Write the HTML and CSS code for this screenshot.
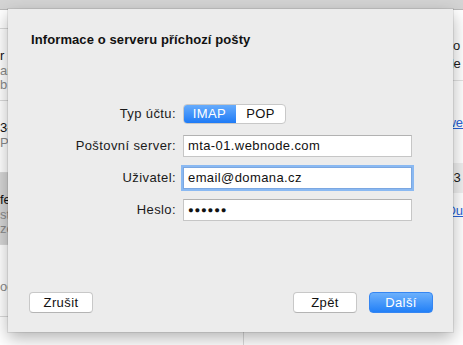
FILE: index.html
```html
<!DOCTYPE html>
<html lang="cs">
<head>
    <meta charset="UTF-8">
    <meta name="viewport" content="width=device-width, initial-scale=1.0">
    <title>Informace o serveru příchozí pošty</title>
    <link rel="stylesheet" href="styles.css">
</head>
<body>
    <div class="app">
        <div class="toolbar"></div>
        <div class="panes">
            <div class="message-list">
                <div class="list-header"></div>
                <div class="message-item">
                    <div class="sender">r com</div>
                    <div class="preview">an</div>
                    <div class="preview">b</div>
                </div>
                <div class="message-item">
                    <div class="sender">3-01</div>
                    <div class="preview">P</div>
                </div>
                <div class="message-item selected">
                    <div class="sender">fe</div>
                    <div class="preview">st</div>
                    <div class="preview">ze</div>
                </div>
                <div class="message-item">
                    <div class="sender"></div>
                    <div class="preview">od</div>
                </div>
            </div>
            <div class="message-view">
                <div class="body-line">co</div>
                <div class="body-line">de</div>
                <hr class="divider">
                <a class="link first-link" href="#">we</a>
                <div class="info-band">13</div>
                <a class="link" href="#">Du</a>
            </div>
        </div>
    </div>

    <!-- account setup sheet -->
    <div class="sheet">
        <h1 class="sheet-title">Informace o serveru příchozí pošty</h1>
        <div class="form">
            <div class="form-label">Typ účtu:</div>
            <div class="segmented">
                <span class="segment active">IMAP</span>
                <span class="segment">POP</span>
            </div>
            <div class="form-label">Poštovní server:</div>
            <div class="field">mta-01.webnode.com</div>
            <div class="form-label">Uživatel:</div>
            <div class="field focused">email@domana.cz</div>
            <div class="form-label">Heslo:</div>
            <div class="field password">●●●●●●</div>
        </div>
        <div class="sheet-buttons">
            <button class="btn">Zrušit</button>
            <div class="btn-group">
                <button class="btn">Zpět</button>
                <button class="btn primary">Další</button>
            </div>
        </div>
    </div>
</body>
</html>
```

FILE: styles.css
```css
body {
    font-family: 'Liberation Sans', Arial, sans-serif;
    font-size: 13px;
    margin: 0;
    width: 463px;
    height: 345px;
    overflow: hidden;
    background-color: #fff;
    color: #1a1a1a;
    position: relative;
}
.toolbar {
    height: 9px;
    background: #d4d4d4;
    border-bottom: 1px solid #b8b8b8;
}
.panes {
    display: flex;
    height: 335px;
}
.message-list {
    width: 249px;
    border-right: 1px solid #dadada;
}
.list-header {
    height: 18px;
    border-bottom: 1px solid #dadada;
}
.message-item {
    height: 51px;
    padding-top: 20px;
    border-bottom: 1px solid #dadada;
    line-height: 14px;
    white-space: nowrap;
}
.message-item.selected {
    background-color: #d6d6d6;
}
.sender {
    color: #111;
    height: 15px;
}
.preview {
    color: #8a8a8a;
}
.message-view {
    flex-grow: 1;
    padding: 27px 0 0 202px;
    line-height: 18px;
    white-space: nowrap;
}
.divider {
    border: none;
    border-top: 1px solid #e2e2e2;
    margin: 7px 0 0 -10px;
}
.link {
    display: block;
    color: #2a63d8;
}
.first-link {
    margin-top: 33px;
}
.info-band {
    background: #efefef;
    margin: 31px 0 0 -10px;
    padding-left: 10px;
    height: 30px;
    line-height: 30px;
}
.info-band + .link {
    margin-top: 9px;
}
.sheet {
    position: absolute;
    left: 8px;
    top: 9px;
    width: 445px;
    height: 323px;
    box-sizing: border-box;
    padding: 23px 20px 19px 21px;
    background: #ececec;
    box-shadow: 0 0 0 1px rgba(0,0,0,0.08), 0 6px 16px rgba(0,0,0,0.3);
    display: flex;
    flex-direction: column;
    letter-spacing: 0.4px;
}
.sheet-title {
    margin: 0;
    padding-left: 2px;
    font-size: 13px;
    line-height: 16px;
    font-weight: bold;
    letter-spacing: 0.1px;
    color: #111;
}
.form {
    margin-top: 55px;
    display: grid;
    grid-template-columns: 147px 229px;
    grid-auto-rows: 22px;
    column-gap: 7px;
    row-gap: 10px;
}
.form-label {
    text-align: right;
    line-height: 22px;
    color: #1a1a1a;
}
.segmented {
    align-self: center;
    display: flex;
    width: 103px;
    height: 20px;
    box-sizing: border-box;
    border: 1px solid #c8c8c8;
    border-radius: 4px;
    background: #fff;
    overflow: hidden;
}
.segment {
    flex-grow: 1;
    text-align: center;
    line-height: 18px;
    color: #111;
}
.segment.active {
    flex-grow: 0;
    width: 53px;
    color: #fff;
    background: linear-gradient(#6aaefc, #1a78f6);
    margin: -1px 0 -1px -1px;
    line-height: 20px;
}
.field {
    box-sizing: border-box;
    background: #fff;
    border: 1px solid #c6c6c6;
    border-top-color: #b2b2b2;
    padding-left: 4px;
    line-height: 20px;
    color: #111;
}
.field.focused {
    border-color: #7ba7e1;
    box-shadow: 0 0 0 2px #8ab9f2;
}
.field.password {
    font-size: 9.5px;
    letter-spacing: 0.8px;
    line-height: 20px;
}
.sheet-buttons {
    margin-top: auto;
    display: flex;
    justify-content: space-between;
}
.btn-group {
    display: flex;
    gap: 12px;
}
.btn {
    font-family: inherit;
    font-size: 13px;
    letter-spacing: inherit;
    width: 64px;
    height: 21px;
    padding: 0;
    background: #fff;
    color: #111;
    border: 1px solid #c8c8c8;
    border-bottom-color: #b4b4b4;
    border-radius: 4px;
}
.btn.primary {
    color: #fff;
    background: linear-gradient(#6cb0fc, #2280f7);
    border-color: #3586f2;
}
```
